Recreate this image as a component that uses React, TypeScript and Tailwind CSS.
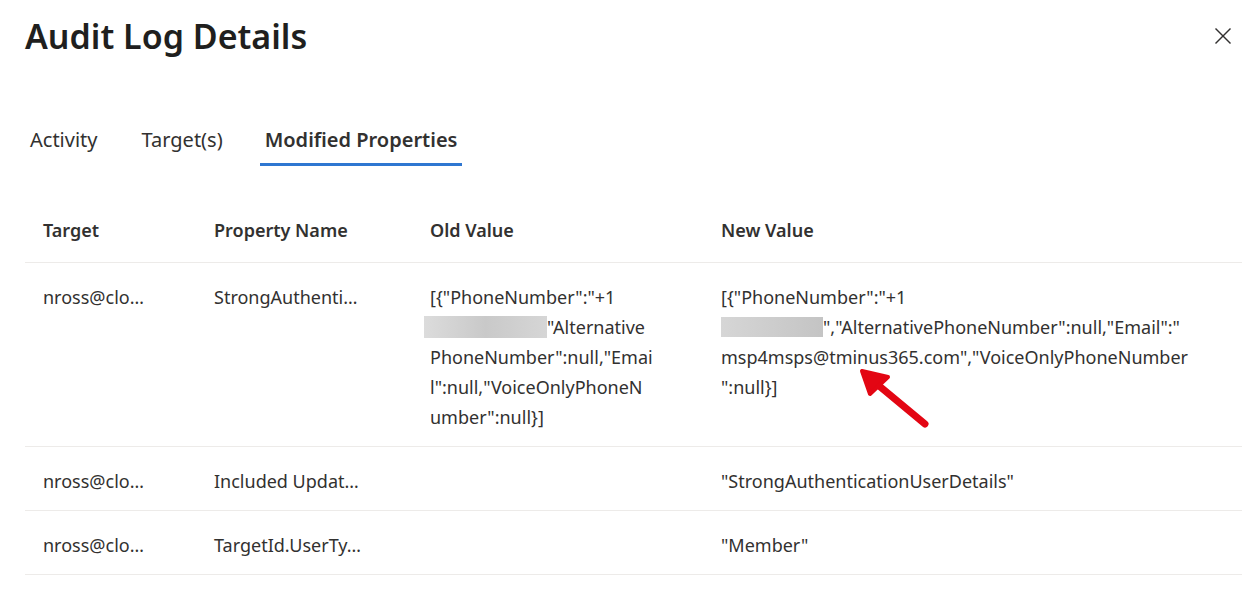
export default function App() {
  const rows = [
    {
      target: "nross@clo…",
      prop: "StrongAuthenti…",
      old: (
        <>
          <div>[{'{'}"PhoneNumber":"+1</div>
          <div className="flex items-center">
            <span className="ml-[-6px] inline-block h-[22px] w-[123px] bg-gradient-to-r from-[#dcdcdc] via-[#c9c9c9] to-[#d6d6d6]" />
            <span>"Alternative</span>
          </div>
          <div>PhoneNumber":null,"Emai</div>
          <div>l":null,"VoiceOnlyPhoneN</div>
          <div>umber":null{'}'}]</div>
        </>
      ),
      next: (
        <>
          <div>[{'{'}"PhoneNumber":"+1</div>
          <div className="flex items-center">
            <span className="inline-block h-[20px] w-[102px] bg-gradient-to-r from-[#d6d6d6] to-[#c4c4c4]" />
            <span>","AlternativePhoneNumber":null,"Email":"</span>
          </div>
          <div>msp4msps@tminus365.com","VoiceOnlyPhoneNumber</div>
          <div>":null{'}'}]</div>
        </>
      ),
    },
    { target: "nross@clo…", prop: "Included Updat…", old: null, next: <div>"StrongAuthenticationUserDetails"</div> },
    { target: "nross@clo…", prop: "TargetId.UserTy…", old: null, next: <div>"Member"</div> },
  ];

  return (
    <div
      className="relative h-[610px] w-[1242px] overflow-hidden bg-white text-[#323130]"
      style={{ fontFamily: '"Segoe UI", "Noto Sans", "Open Sans", sans-serif' }}
    >
      {/* Header */}
      <div className="flex items-start justify-between pl-[25px] pr-[5px] pt-[12px]">
        <h1 className="text-[34px] font-semibold leading-[48px] text-[#201f1e]">Audit Log Details</h1>
        <button className="mt-[10px] p-1 text-[#323130]">
          <svg width="20" height="20" viewBox="0 0 20 20" fill="none" stroke="currentColor" strokeWidth="1.4">
            <line x1="2.5" y1="2.5" x2="17.5" y2="17.5" />
            <line x1="17.5" y1="2.5" x2="2.5" y2="17.5" />
          </svg>
        </button>
      </div>

      {/* Tabs */}
      <div className="mt-[65px] flex pl-[25px] text-[20px] leading-[30px]">
        <div className="px-[5px] pb-[11px] text-[#323130]">Activity</div>
        <div className="ml-[34px] px-[5px] pb-[11px] text-[#323130]">Target(s)</div>
        <div className="ml-[32px] border-b-[3px] border-[#2f77d1] px-[5px] pb-[8px] font-semibold text-[#323130]">
          Modified Properties
        </div>
      </div>

      {/* Table */}
      <div className="ml-[25px] mt-[49px] text-[18px] leading-[30px]">
        <div className="grid grid-cols-[171px_216px_291px_1fr] border-b border-[#edebe9] pb-[17px] font-semibold">
          <div className="px-[18px]">Target</div>
          <div className="px-[18px]">Property Name</div>
          <div className="px-[18px]">Old Value</div>
          <div className="px-[18px]">New Value</div>
        </div>
        {rows.map((r, i) => (
          <div
            key={i}
            className="grid grid-cols-[171px_216px_291px_1fr] border-b border-[#edebe9] pb-[14px] pt-[19px]"
          >
            <div className="px-[18px] whitespace-nowrap">{r.target}</div>
            <div className="px-[18px] whitespace-nowrap">{r.prop}</div>
            <div className="px-[18px] whitespace-nowrap">{r.old}</div>
            <div className="px-[18px] whitespace-nowrap">{r.next}</div>
          </div>
        ))}
      </div>

      {/* Red arrow annotation */}
      <svg className="absolute left-[850px] top-[360px]" width="90" height="80" viewBox="0 0 90 80">
        <line x1="75" y1="64" x2="22" y2="20" stroke="#e30613" strokeWidth="7" strokeLinecap="round" />
        <polygon points="12,11 38,17 20,34" fill="#e30613" stroke="#e30613" strokeWidth="4" strokeLinejoin="round" />
      </svg>
    </div>
  );
}
